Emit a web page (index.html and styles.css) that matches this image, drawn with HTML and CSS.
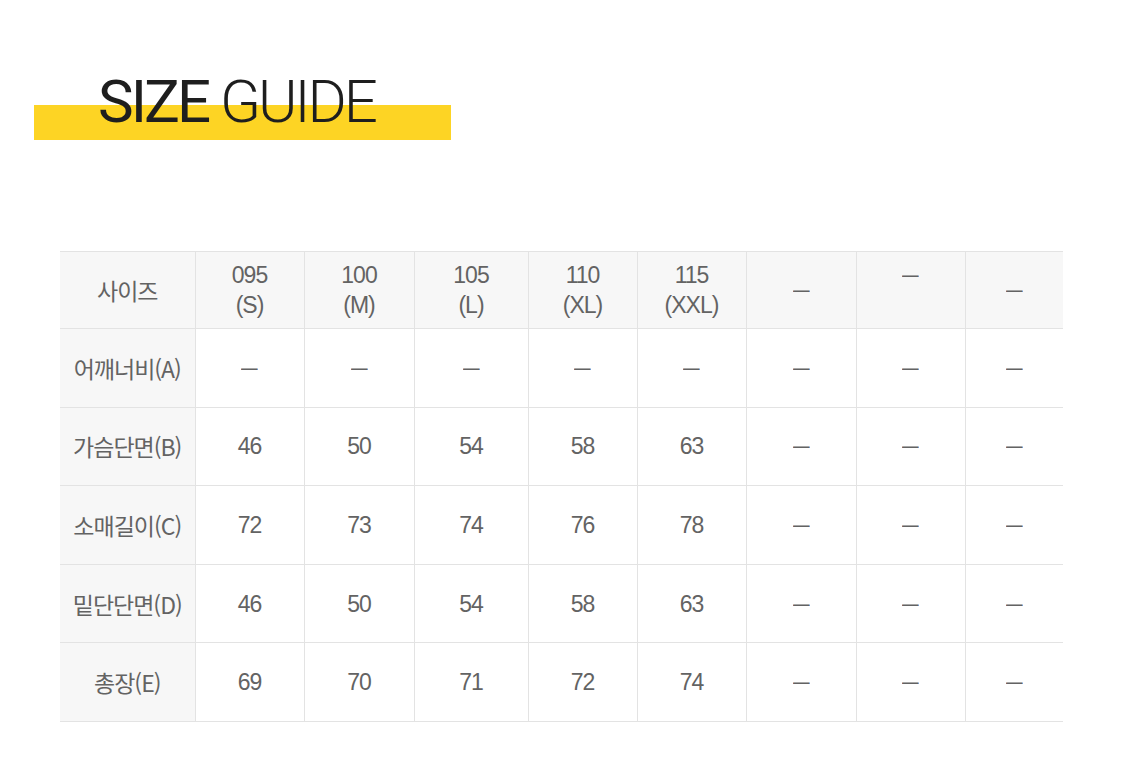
FILE: index.html
```html
<!DOCTYPE html>
<html lang="ko">
<head>
<meta charset="utf-8">
<title>Size Guide</title>
<link rel="stylesheet" href="styles.css">
</head>
<body>
<div class="page">
  <h1 class="title"><span class="t-bold">SIZE</span> <span class="t-light">GUIDE</span></h1>
  <table class="size-table">
    <colgroup>
      <col style="width:135px"><col style="width:109px"><col style="width:110px"><col style="width:114px"><col style="width:109px"><col style="width:109px"><col style="width:110px"><col style="width:109px"><col style="width:98px">
    </colgroup>
    <thead>
      <tr class="head-row">
        <th class="label">사이즈</th>
        <th>095<br>(S)</th>
        <th>100<br>(M)</th>
        <th>105<br>(L)</th>
        <th>110<br>(XL)</th>
        <th>115<br>(XXL)</th>
        <th><span class="dash">–</span></th>
        <th><span class="dash">–</span><br>&nbsp;</th>
        <th><span class="dash">–</span></th>
      </tr>
    </thead>
    <tbody>
      <tr><th class="label">어깨너비(A)</th><td><span class="dash">–</span></td><td><span class="dash">–</span></td><td><span class="dash">–</span></td><td><span class="dash">–</span></td><td><span class="dash">–</span></td><td><span class="dash">–</span></td><td><span class="dash">–</span></td><td><span class="dash">–</span></td></tr>
      <tr><th class="label">가슴단면(B)</th><td>46</td><td>50</td><td>54</td><td>58</td><td>63</td><td><span class="dash">–</span></td><td><span class="dash">–</span></td><td><span class="dash">–</span></td></tr>
      <tr><th class="label">소매길이(C)</th><td>72</td><td>73</td><td>74</td><td>76</td><td>78</td><td><span class="dash">–</span></td><td><span class="dash">–</span></td><td><span class="dash">–</span></td></tr>
      <tr><th class="label">밑단단면(D)</th><td>46</td><td>50</td><td>54</td><td>58</td><td>63</td><td><span class="dash">–</span></td><td><span class="dash">–</span></td><td><span class="dash">–</span></td></tr>
      <tr><th class="label">총장(E)</th><td>69</td><td>70</td><td>71</td><td>72</td><td>74</td><td><span class="dash">–</span></td><td><span class="dash">–</span></td><td><span class="dash">–</span></td></tr>
    </tbody>
  </table>
</div>
</body>
</html>
```

FILE: styles.css
```css
html, body {
  margin: 0;
  padding: 0;
  background: #ffffff;
}

.page {
  width: 1125px;
  height: 776px;
  overflow: hidden;
  padding-top: 72px;
  box-sizing: border-box;
}

.title {
  margin: 0 0 0 34px;
  width: 417px;
  height: 68px;
  padding-left: 64px;
  box-sizing: border-box;
  background: linear-gradient(to bottom, transparent 33px, #fdd424 33px);
  font-family: Roboto, "Liberation Sans", sans-serif;
  font-size: 60px;
  line-height: 60px;
  color: #1e1e1e;
  letter-spacing: -3px;
  white-space: nowrap;
}

.t-bold {
  font-weight: 400;
}

.t-light {
  font-weight: 300;
}

.size-table {
  margin: 111px 0 0 60px;
  width: 1003px;
  border-collapse: collapse;
  table-layout: fixed;
  font-family: "Liberation Sans", "Noto Sans CJK KR", sans-serif;
  font-size: 23px;
  color: #636363;
  letter-spacing: -1px;
}

.size-table th,
.size-table td {
  height: 77.6px;
  padding: 0;
  text-align: center;
  vertical-align: middle;
  font-weight: 400;
  line-height: 30px;
  border-top: 1px solid #e3e3e3;
  border-bottom: 1px solid #e3e3e3;
  border-left: 1px solid #e3e3e3;
}

.size-table .head-row th {
  height: 76px;
}

.size-table tr > :first-child {
  border-left: none;
}

.size-table thead th {
  background: #f7f7f7;
}

.size-table th.label {
  background: #f7f7f7;
  font-family: "Noto Sans CJK KR", "Liberation Sans", sans-serif;
  letter-spacing: -1px;
}

.dash {
  display: inline-block;
  letter-spacing: 0;
  transform: scaleX(1.3);
  position: relative;
  top: -1px;
}
```
